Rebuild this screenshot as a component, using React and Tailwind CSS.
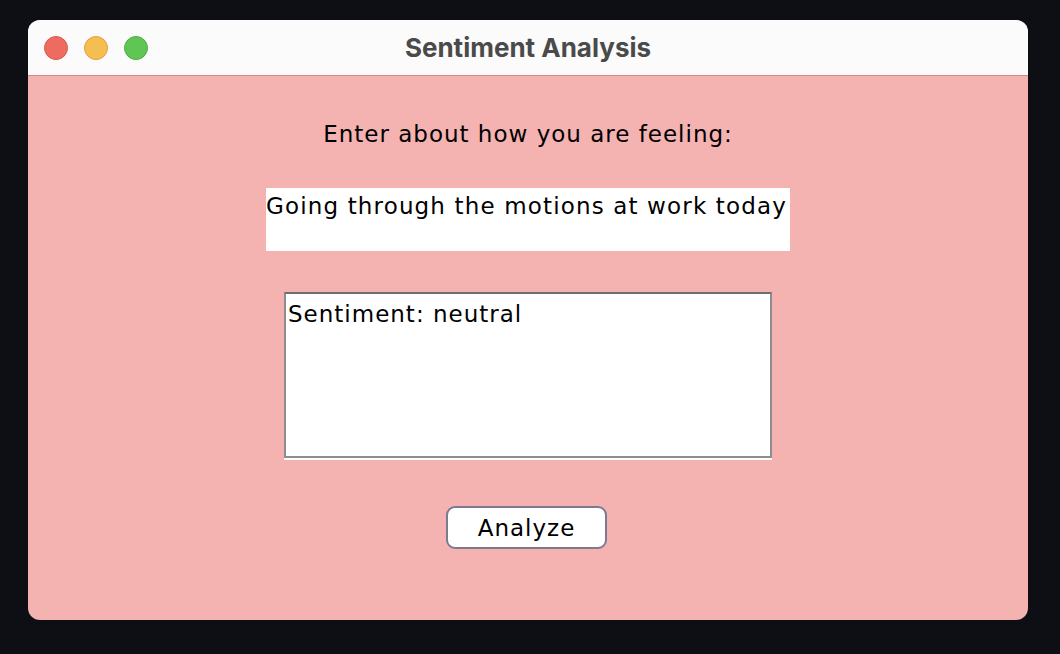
export default function App() {
  const ui = { fontFamily: '"DejaVu Sans", "Liberation Sans", sans-serif' }

  return (
    <div className="w-[1060px] h-[654px] bg-[#0e0f14] pt-[20px] pl-[28px]">
      <div className="w-[1000px] h-[600px] rounded-[12px] overflow-hidden flex flex-col bg-[#f4b2b1]">
        {/* Title bar */}
        <div className="h-[56px] shrink-0 bg-[#fbfbfb] border-b border-[#d48a89] flex items-center relative">
          <div className="flex items-center gap-[16px] pl-[16px]">
            <span className="w-[24px] h-[24px] rounded-full bg-[#ee6b60] border border-[#d65a50]" />
            <span className="w-[24px] h-[24px] rounded-full bg-[#f6be50] border border-[#dba640]" />
            <span className="w-[24px] h-[24px] rounded-full bg-[#61c554] border border-[#50ab45]" />
          </div>
          <div
            className="absolute inset-0 flex items-center justify-center text-[26px] font-bold text-[#4a4a4a]"
            style={{ fontFamily: 'Inter, "Liberation Sans", sans-serif' }}
          >
            Sentiment Analysis
          </div>
        </div>

        {/* Body */}
        <div className="flex-1 flex flex-col items-center text-black text-[23px] leading-[26px] tracking-[1px]" style={ui}>
          <p className="mt-[45px]">Enter about how you are feeling:</p>

          <div className="mt-[41px] w-[524px] h-[63px] bg-white pt-[5px] whitespace-nowrap tracking-[1.15px]">
            Going through the motions at work today
          </div>

          <div className="mt-[41px] w-[488px] flex flex-col">
            <div className="h-[166px] bg-white border-2 border-[#8e8e8e] border-t-[#6e6e6e] px-[2px] pt-[7px]">
              Sentiment: neutral
            </div>
            <div className="h-[2px] bg-white" />
          </div>

          <button className="mt-[46px] mr-[3px] w-[161px] h-[43px] bg-white rounded-[9px] border-2 border-[#7b7a90]">
            Analyze
          </button>
        </div>
      </div>
    </div>
  )
}
